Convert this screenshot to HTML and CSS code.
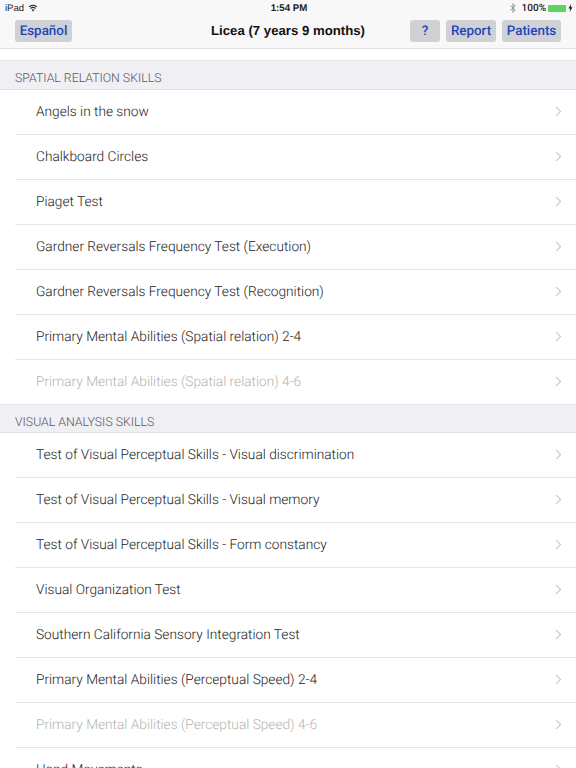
FILE: index.html
```html
<!DOCTYPE html>
<html lang="en">
<head>
<meta charset="utf-8">
<title>Licea</title>
<link rel="stylesheet" href="styles.css">
</head>
<body>
<svg class="defs" width="0" height="0" aria-hidden="true"><defs>
<symbol id="chev" viewBox="0 0 8 13"><path d="M1 1l5.5 5.5L1 12" fill="none" stroke="currentColor" stroke-width="1.3"/></symbol>
</defs></svg>
<div class="app">
<header class="top">
  <div class="status">
    <div class="st-left"><span>iPad</span>
      <svg class="wifi" width="10" height="8" viewBox="0 0 12 9"><path d="M6 8.6L4.3 6.6a2.6 2.6 0 0 1 3.4 0zM3.4 5.6L2.6 4.6a5.2 5.2 0 0 1 6.8 0l-.8 1a4 4 0 0 0-5.2 0zM1.7 3.6L.8 2.6a8 8 0 0 1 10.4 0l-.9 1a6.7 6.7 0 0 0-8.6 0z" fill="#222"/></svg>
    </div>
    <div class="st-time">1:54 PM</div>
    <div class="st-right">
      <svg class="bt" width="6" height="10" viewBox="0 0 6 10"><path d="M.6 2.6l4.4 4.6L3 9.3V.7l2 2.1L.6 7.4" fill="none" stroke="#888" stroke-width=".9"/></svg>
      <span class="pct">100%</span>
      <span class="batt"><span class="batt-fill"></span></span>
      <svg width="5" height="8" viewBox="0 0 5 8"><path d="M3 0L.4 4.5h1.7L1.6 8l3-4.8H2.8z" fill="#222"/></svg>
    </div>
  </div>
  <nav class="nav">
    <button class="btn btn-es">Español</button>
    <h1 class="title">Licea (7 years 9 months)</h1>
    <div class="nav-right">
      <button class="btn btn-q">?</button>
      <button class="btn btn-rep">Report</button>
      <button class="btn btn-pat">Patients</button>
    </div>
  </nav>
</header>
<main class="list">
  <h2 class="sec">SPATIAL RELATION SKILLS</h2>
  <ul class="rows">
    <li class="row">Angels in the snow<svg class="chev"><use href="#chev"/></svg></li>
    <li class="row">Chalkboard Circles<svg class="chev"><use href="#chev"/></svg></li>
    <li class="row">Piaget Test<svg class="chev"><use href="#chev"/></svg></li>
    <li class="row">Gardner Reversals Frequency Test (Execution)<svg class="chev"><use href="#chev"/></svg></li>
    <li class="row">Gardner Reversals Frequency Test (Recognition)<svg class="chev"><use href="#chev"/></svg></li>
    <li class="row">Primary Mental Abilities (Spatial relation) 2-4<svg class="chev"><use href="#chev"/></svg></li>
    <li class="row off">Primary Mental Abilities (Spatial relation) 4-6<svg class="chev"><use href="#chev"/></svg></li>
  </ul>
  <h2 class="sec sec2">VISUAL ANALYSIS SKILLS</h2>
  <ul class="rows">
    <li class="row">Test of Visual Perceptual Skills - Visual discrimination<svg class="chev"><use href="#chev"/></svg></li>
    <li class="row">Test of Visual Perceptual Skills - Visual memory<svg class="chev"><use href="#chev"/></svg></li>
    <li class="row">Test of Visual Perceptual Skills - Form constancy<svg class="chev"><use href="#chev"/></svg></li>
    <li class="row">Visual Organization Test<svg class="chev"><use href="#chev"/></svg></li>
    <li class="row">Southern California Sensory Integration Test<svg class="chev"><use href="#chev"/></svg></li>
    <li class="row">Primary Mental Abilities (Perceptual Speed) 2-4<svg class="chev"><use href="#chev"/></svg></li>
    <li class="row off">Primary Mental Abilities (Perceptual Speed) 4-6<svg class="chev"><use href="#chev"/></svg></li>
    <li class="row">Hand Movements<svg class="chev"><use href="#chev"/></svg></li>
  </ul>
</main>
</div>
</body>
</html>
```
FILE: styles.css
```css
* { box-sizing: border-box; }
html, body { margin: 0; padding: 0; height: 768px; overflow: hidden; background: #fff; }
body { font-family: "Liberation Sans", Arial, sans-serif; color: #222; text-rendering: geometricPrecision; }
.defs { position: absolute; }
.app { width: 576px; height: 768px; overflow: hidden; }
.top { height: 49px; background: #f8f8f8; border-bottom: 1px solid #dedee0; }
.status { height: 16px; display: flex; align-items: center; justify-content: space-between; padding: 0 3px 0 5px; font-size: 9.5px; color: #222; position: relative; }
.st-left, .st-right { display: flex; align-items: center; gap: 4px; }
.st-right { gap: 2px; }
.bt { margin-right: 4px; }
.pct { font: 500 10px Roboto, sans-serif; }
.st-time { position: absolute; left: 2px; right: 0; text-align: center; font-weight: 700; font-size: 9.7px; }
.batt { width: 18px; height: 7px; background: #e6e6e6; border-radius: 1px; display: block; }
.batt-fill { display: block; width: 100%; height: 100%; background: #5fd35f; border-radius: 1px; }
.nav { height: 32px; display: flex; align-items: flex-start; justify-content: space-between; padding: 4px 15px; position: relative; }
.nav-right { display: flex; gap: 6px; }
.btn { height: 22px; padding: 2px 0 0; border: 0; border-radius: 3px; background: #d0d1d4; color: #2146b8; font: 500 13.4px/20px Roboto, sans-serif; text-align: center; text-rendering: geometricPrecision; }
.btn-es { width: 57px; }
.btn-q { width: 30px; }
.btn-rep { width: 50px; }
.btn-pat { width: 59px; }
.title { position: absolute; left: 0; right: 0; top: 4px; margin: 0; text-align: center; font: 700 13.2px/22px "Liberation Sans", Arial, sans-serif; color: #111; }
.list { padding-top: 11px; }
.sec { margin: 0; height: 30px; padding: 4px 15px 0; background: #efeff4; border-top: 1px solid #e4e4e8; border-bottom: 1px solid #dedee2; font: 300 12.3px/29px Roboto, sans-serif; color: #55555a; }
.sec2 { height: 29px; margin-top: -1px; }
.rows { margin: 0; padding: 0; list-style: none; }
.row { height: 45px; margin-left: 15px; padding: 0 14px 1px 21px; display: flex; align-items: center; justify-content: space-between; border-bottom: 1px solid #e6e6e8; font: 300 13.7px/20px Roboto, sans-serif; color: #222; }
.rows .row:last-child { border-bottom-color: transparent; }
.off { color: #b4b4b6; }
.chev { width: 7px; height: 11px; color: #c7c7cc; }
```
